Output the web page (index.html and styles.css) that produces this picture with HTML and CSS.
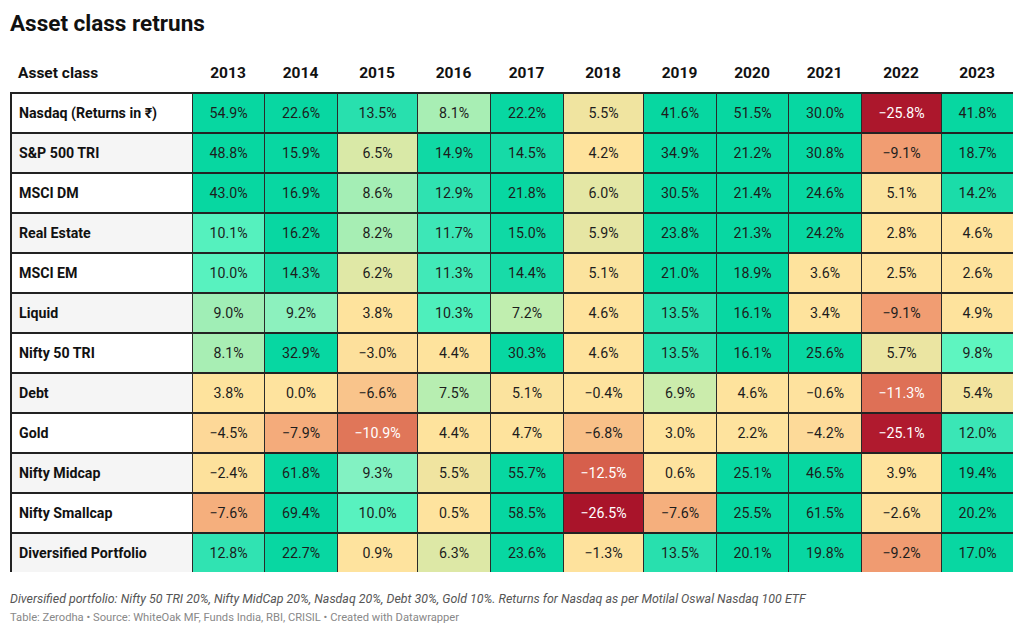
FILE: index.html
```html
<!DOCTYPE html>
<html lang="en">
<head>
<meta charset="utf-8">
<title>Asset class retruns</title>
<link rel="stylesheet" href="styles.css">
</head>
<body>
<div class="page">
  <h1 class="title">Asset class retruns</h1>
  <table class="grid">
    <colgroup>
      <col class="c-name"><col class="c72"><col class="c73"><col class="c80"><col class="c73"><col class="c73"><col class="c80"><col class="c73"><col class="c72"><col class="c73"><col class="c80"><col class="c72">
    </colgroup>
    <thead>
      <tr><th class="h-name">Asset class</th><th>2013</th><th>2014</th><th>2015</th><th>2016</th><th>2017</th><th>2018</th><th>2019</th><th>2020</th><th>2021</th><th>2022</th><th>2023</th></tr>
    </thead>
    <tbody>
      <tr><td class="name">Nasdaq (Returns in ₹)</td><td class="v">54.9%</td><td class="v">22.6%</td><td class="v">13.5%</td><td class="v">8.1%</td><td class="v">22.2%</td><td class="v">5.5%</td><td class="v">41.6%</td><td class="v">51.5%</td><td class="v">30.0%</td><td class="v">−25.8%</td><td class="v">41.8%</td></tr>
      <tr><td class="name">S&amp;P 500 TRI</td><td class="v">48.8%</td><td class="v">15.9%</td><td class="v">6.5%</td><td class="v">14.9%</td><td class="v">14.5%</td><td class="v">4.2%</td><td class="v">34.9%</td><td class="v">21.2%</td><td class="v">30.8%</td><td class="v">−9.1%</td><td class="v">18.7%</td></tr>
      <tr><td class="name">MSCI DM</td><td class="v">43.0%</td><td class="v">16.9%</td><td class="v">8.6%</td><td class="v">12.9%</td><td class="v">21.8%</td><td class="v">6.0%</td><td class="v">30.5%</td><td class="v">21.4%</td><td class="v">24.6%</td><td class="v">5.1%</td><td class="v">14.2%</td></tr>
      <tr><td class="name">Real Estate</td><td class="v">10.1%</td><td class="v">16.2%</td><td class="v">8.2%</td><td class="v">11.7%</td><td class="v">15.0%</td><td class="v">5.9%</td><td class="v">23.8%</td><td class="v">21.3%</td><td class="v">24.2%</td><td class="v">2.8%</td><td class="v">4.6%</td></tr>
      <tr><td class="name">MSCI EM</td><td class="v">10.0%</td><td class="v">14.3%</td><td class="v">6.2%</td><td class="v">11.3%</td><td class="v">14.4%</td><td class="v">5.1%</td><td class="v">21.0%</td><td class="v">18.9%</td><td class="v">3.6%</td><td class="v">2.5%</td><td class="v">2.6%</td></tr>
      <tr><td class="name">Liquid</td><td class="v">9.0%</td><td class="v">9.2%</td><td class="v">3.8%</td><td class="v">10.3%</td><td class="v">7.2%</td><td class="v">4.6%</td><td class="v">13.5%</td><td class="v">16.1%</td><td class="v">3.4%</td><td class="v">−9.1%</td><td class="v">4.9%</td></tr>
      <tr><td class="name">Nifty 50 TRI</td><td class="v">8.1%</td><td class="v">32.9%</td><td class="v">−3.0%</td><td class="v">4.4%</td><td class="v">30.3%</td><td class="v">4.6%</td><td class="v">13.5%</td><td class="v">16.1%</td><td class="v">25.6%</td><td class="v">5.7%</td><td class="v">9.8%</td></tr>
      <tr><td class="name">Debt</td><td class="v">3.8%</td><td class="v">0.0%</td><td class="v">−6.6%</td><td class="v">7.5%</td><td class="v">5.1%</td><td class="v">−0.4%</td><td class="v">6.9%</td><td class="v">4.6%</td><td class="v">−0.6%</td><td class="v">−11.3%</td><td class="v">5.4%</td></tr>
      <tr><td class="name">Gold</td><td class="v">−4.5%</td><td class="v">−7.9%</td><td class="v">−10.9%</td><td class="v">4.4%</td><td class="v">4.7%</td><td class="v">−6.8%</td><td class="v">3.0%</td><td class="v">2.2%</td><td class="v">−4.2%</td><td class="v">−25.1%</td><td class="v">12.0%</td></tr>
      <tr><td class="name">Nifty Midcap</td><td class="v">−2.4%</td><td class="v">61.8%</td><td class="v">9.3%</td><td class="v">5.5%</td><td class="v">55.7%</td><td class="v">−12.5%</td><td class="v">0.6%</td><td class="v">25.1%</td><td class="v">46.5%</td><td class="v">3.9%</td><td class="v">19.4%</td></tr>
      <tr><td class="name">Nifty Smallcap</td><td class="v">−7.6%</td><td class="v">69.4%</td><td class="v">10.0%</td><td class="v">0.5%</td><td class="v">58.5%</td><td class="v">−26.5%</td><td class="v">−7.6%</td><td class="v">25.5%</td><td class="v">61.5%</td><td class="v">−2.6%</td><td class="v">20.2%</td></tr>
      <tr><td class="name">Diversified Portfolio</td><td class="v">12.8%</td><td class="v">22.7%</td><td class="v">0.9%</td><td class="v">6.3%</td><td class="v">23.6%</td><td class="v">−1.3%</td><td class="v">13.5%</td><td class="v">20.1%</td><td class="v">19.8%</td><td class="v">−9.2%</td><td class="v">17.0%</td></tr>
    </tbody>
  </table>
  <p class="note">Diversified portfolio: Nifty 50 TRI 20%, Nifty MidCap 20%, Nasdaq 20%, Debt 30%, Gold 10%. Returns for Nasdaq as per Motilal Oswal Nasdaq 100 ETF</p>
  <p class="source">Table: Zerodha • Source: WhiteOak MF, Funds India, RBI, CRISIL • Created with Datawrapper</p>
</div>
<script src="script.js"></script>
</body>
</html>
```

FILE: styles.css
```css
html, body {
  margin: 0;
  padding: 0;
  background: #ffffff;
}
body {
  font-family: Roboto, "Liberation Sans", "DejaVu Sans", sans-serif;
  color: #1d1d1d;
}
.page {
  padding: 10px 10px 0 10px;
}
.title {
  margin: 0;
  font-size: 22.5px;
  line-height: 26px;
  font-weight: 700;
  color: #111;
}
.grid {
  margin-top: 19px;
  table-layout: fixed;
  width: 1003px;
  border-collapse: separate;
  border-spacing: 0;
}
.c-name { width: 182px; }
.c72 { width: 72px; }
.c73 { width: 73px; }
.c80 { width: 80px; }

.grid th {
  font-size: 15.5px;
  font-weight: 700;
  line-height: 37px;
  height: 37px;
  padding: 0;
  text-align: center;
  color: #111;
}
.grid th.h-name {
  text-align: left;
  padding-left: 8px;
}
.grid td {
  padding: 0;
  height: 38px;
  line-height: 38px;
  font-size: 14.2px;
  text-align: center;
  border-top: 2px solid #222;
  border-left: 1px solid #2a2a2a;
  white-space: nowrap;
  color: #1d1d1d;
}
.grid td.name {
  text-align: left;
  padding-left: 7px;
  font-weight: 700;
  border-left: 2px solid #222;
  background: #ffffff;
  color: #111;
}
.grid tbody tr:nth-child(even) td.name {
  background: #f5f5f5;
}
.grid td.dark {
  color: #ffffff;
}
.note {
  margin: 18px 0 0 0;
  font-size: 12.4px;
  line-height: 18px;
  font-style: italic;
  color: #555;
}
.source {
  margin: 1px 0 0 0;
  font-size: 11.2px;
  line-height: 18px;
  color: #888;
}
```

FILE: script.js
```js
(function () {
  var stops = [
    [-26.5, [169, 20, 42]],
    [-25.0, [176, 26, 46]],
    [-12.5, [214, 95, 76]],
    [-10.9, [224, 118, 89]],
    [-9.1, [241, 157, 114]],
    [-7.6, [245, 175, 125]],
    [-6.6, [249, 196, 139]],
    [-4.5, [253, 216, 152]],
    [-3.0, [253, 224, 156]],
    [0.0, [254, 227, 158]],
    [5.0, [254, 227, 157]],
    [5.5, [240, 228, 160]],
    [6.0, [228, 231, 165]],
    [6.5, [217, 233, 167]],
    [7.2, [192, 238, 175]],
    [8.0, [169, 238, 180]],
    [9.0, [160, 238, 182]],
    [9.3, [130, 242, 194]],
    [9.8, [94, 245, 192]],
    [10.5, [72, 236, 187]],
    [12.0, [58, 230, 182]],
    [13.5, [40, 224, 174]],
    [14.5, [22, 218, 167]],
    [15.5, [8, 215, 162]],
    [100, [5, 214, 160]]
  ];
  function colorFor(v) {
    if (v <= stops[0][0]) return stops[0][1];
    for (var i = 1; i < stops.length; i++) {
      if (v <= stops[i][0]) {
        var a = stops[i - 1], b = stops[i];
        var t = (v - a[0]) / (b[0] - a[0]);
        return [0, 1, 2].map(function (k) {
          return Math.round(a[1][k] + (b[1][k] - a[1][k]) * t);
        });
      }
    }
    return stops[stops.length - 1][1];
  }
  var cells = document.querySelectorAll('.grid td.v');
  for (var i = 0; i < cells.length; i++) {
    var txt = cells[i].textContent.replace('\u2212', '-').replace('%', '');
    var v = parseFloat(txt);
    var c = colorFor(v);
    cells[i].style.backgroundColor = 'rgb(' + c.join(',') + ')';
    if (v <= -10.5) cells[i].classList.add('dark');
  }
})();
```
